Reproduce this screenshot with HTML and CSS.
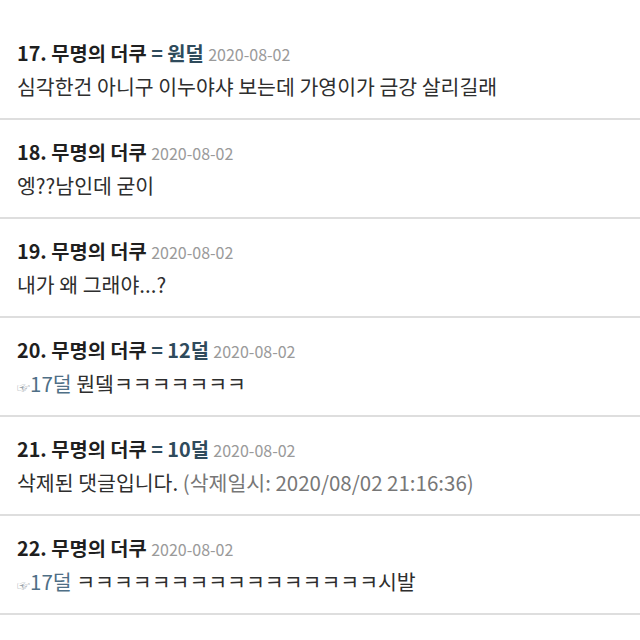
FILE: index.html
```html
<!DOCTYPE html>
<html>
<head>
    <meta charset="utf-8">
    <link rel="stylesheet" href="styles.css">
</head>
<body>
<div class="comments">
    <div class="comment">
        <div class="head"><b class="name">17. 무명의 더쿠</b> <span class="reply-to">= 원덜</span> <span class="date">2020-08-02</span></div>
        <div class="text">심각한건 아니구 이누야샤 보는데 가영이가 금강 살리길래</div>
    </div>
    <div class="comment">
        <div class="head"><b class="name">18. 무명의 더쿠</b> <span class="date">2020-08-02</span></div>
        <div class="text">엥??남인데 굳이</div>
    </div>
    <div class="comment">
        <div class="head"><b class="name">19. 무명의 더쿠</b> <span class="date">2020-08-02</span></div>
        <div class="text">내가 왜 그래야...?</div>
    </div>
    <div class="comment">
        <div class="head"><b class="name">20. 무명의 더쿠</b> <span class="reply-to">= 12덜</span> <span class="date">2020-08-02</span></div>
        <div class="text"><span class="ref"><span class="hand">☞</span>17덜</span> 뭔뎈ㅋㅋㅋㅋㅋㅋㅋ</div>
    </div>
    <div class="comment">
        <div class="head"><b class="name">21. 무명의 더쿠</b> <span class="reply-to">= 10덜</span> <span class="date">2020-08-02</span></div>
        <div class="text">삭제된 댓글입니다. <span class="deleted">(삭제일시: 2020/08/02 21:16:36)</span></div>
    </div>
    <div class="comment">
        <div class="head"><b class="name">22. 무명의 더쿠</b> <span class="date">2020-08-02</span></div>
        <div class="text"><span class="ref"><span class="hand">☞</span>17덜</span> ㅋㅋㅋㅋㅋㅋㅋㅋㅋㅋㅋㅋㅋㅋㅋㅋ시발</div>
    </div>
</div>
</body>
</html>
```

FILE: styles.css
```css
body {
    margin: 0;
    background: #fff;
    font-family: "Noto Sans CJK KR", "Noto Sans", sans-serif;
    color: #333;
}

.comments {
    padding-top: 21px;
}

.comment {
    padding: 19px 17px 18px;
    border-bottom: 2px solid #dedede;
}

.head {
    height: 26px;
    line-height: 26px;
    font-size: 19.8px;
    white-space: nowrap;
}

.name {
    color: #1f1f1f;
    font-weight: bold;
}

.reply-to {
    color: #2f4b5c;
    font-weight: bold;
}

.date {
    font-size: 16px;
    color: #9a9a9a;
}

.text {
    margin-top: 6px;
    height: 28px;
    line-height: 28px;
    font-size: 20.5px;
    color: #2e2e2e;
    white-space: nowrap;
}

.ref {
    color: #4f6f86;
}

.hand {
    font-size: 13px;
    color: #9aa3aa;
}

.deleted {
    color: #777;
}
```
